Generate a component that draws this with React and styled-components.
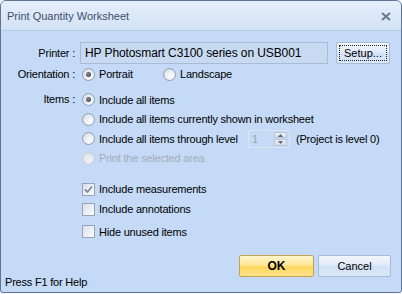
import React from "react";
import styled, { createGlobalStyle } from "styled-components";

const GlobalStyle = createGlobalStyle`
  html, body {
    margin: 0;
    padding: 0;
    background: #f4f6f9;
  }
  body {
    font-family: "Liberation Sans", Arial, sans-serif;
    font-size: 11px;
    letter-spacing: -0.2px;
    color: #000;
  }
`;

const Window = styled.div`
  width: 402px;
  height: 293px;
  box-sizing: border-box;
  display: flex;
  flex-direction: column;
  border: 1px solid #5f7596;
  border-radius: 6px 6px 3px 3px;
  background: #c4daf6;
  overflow: hidden;
`;

const TitleBar = styled.div`
  height: 30px;
  flex: none;
  box-sizing: border-box;
  display: flex;
  align-items: center;
  justify-content: space-between;
  padding: 1px 10px 0 6px;
  background: linear-gradient(#e6eefa, #dbe7f7 55%, #d2e2f5);
  border-bottom: 1px solid #b7cbe5;
  color: #3e4f6c;
  font-size: 11px;
  letter-spacing: 0;
`;

const Body = styled.div`
  flex: 1;
  display: flex;
  flex-direction: column;
  padding-top: 11px;
`;

const Row = styled.div`
  display: grid;
  grid-template-columns: 74px 1fr;
  column-gap: 5px;
  margin-top: ${(p) => p.$top || 0}px;
`;

const Label = styled.div`
  text-align: right;
  line-height: ${(p) => p.$line || 20}px;
  white-space: nowrap;
`;

const Content = styled.div`
  display: flex;
  flex-direction: ${(p) => (p.$column ? "column" : "row")};
  align-items: ${(p) => (p.$column ? "stretch" : "center")};
`;

const Field = styled.div`
  width: 248px;
  height: 22px;
  box-sizing: border-box;
  border: 1px solid #a7bcd7;
  background: #c7daf2;
  padding-left: 4px;
  line-height: 20px;
  font-size: 12px;
  letter-spacing: -0.1px;
  white-space: nowrap;
`;

const Button = styled.button`
  height: 22px;
  width: ${(p) => p.$w}px;
  box-sizing: border-box;
  margin: 0 0 0 ${(p) => p.$ml || 0}px;
  padding: ${(p) => (p.$focused ? "2px" : "0")};
  border: 1px solid ${(p) => (p.$primary ? "#c4a24f" : "#a6bcd9")};
  border-radius: 2px;
  font-family: inherit;
  font-size: ${(p) => (p.$primary ? "12px" : "11px")};
  letter-spacing: 0;
  font-weight: ${(p) => (p.$primary ? "bold" : "normal")};
  color: #000;
  background: ${(p) =>
    p.$primary
      ? "linear-gradient(#fff6cf, #ffe697 45%, #ffd75f 55%, #ffe28a)"
      : "linear-gradient(#f3f7fd, #e1ebf8 45%, #d1e1f5 55%, #dbe8f8)"};
  display: flex;
  align-items: center;
  justify-content: center;
`;

const Focus = styled.span`
  display: flex;
  align-items: center;
  justify-content: center;
  width: 100%;
  height: 100%;
  box-sizing: border-box;
  border: 1px dotted #222;
`;

const Option = styled.label`
  display: flex;
  align-items: center;
  height: ${(p) => p.$h || 19.5}px;
  width: ${(p) => (p.$w ? `${p.$w}px` : "auto")};
  flex: none;
  margin-left: 2px;
  margin-top: ${(p) => p.$top || 0}px;
  color: ${(p) => (p.$disabled ? "#a3acb9" : "#000")};
  white-space: nowrap;
`;

const Radio = styled.span`
  width: 13px;
  height: 13px;
  box-sizing: border-box;
  border-radius: 50%;
  border: 1px solid ${(p) => (p.$disabled ? "#c3cbd6" : "#8f9db2")};
  background: ${(p) =>
    p.$disabled
      ? "radial-gradient(circle at 60% 65%, #f0f2f5, #d7dde5)"
      : "radial-gradient(circle at 65% 70%, #ffffff, #e6eaf0 55%, #c9d1dc)"};
  margin-right: 4px;
  display: flex;
  align-items: center;
  justify-content: center;
  flex: none;
  &::after {
    content: "";
    display: ${(p) => (p.$checked ? "block" : "none")};
    width: 5px;
    height: 5px;
    border-radius: 50%;
    background: radial-gradient(circle at 40% 40%, #8a8f98, #2a2f36);
  }
`;

const Check = styled.span`
  width: 13px;
  height: 13px;
  box-sizing: border-box;
  border: 1px solid #95a3b7;
  background: linear-gradient(135deg, #d9dfe7, #eef1f5 60%, #fbfcfd);
  margin-right: 4px;
  flex: none;
  display: flex;
  align-items: center;
  justify-content: center;
`;

const Spinner = styled.div`
  width: 42px;
  height: 18px;
  box-sizing: border-box;
  border: 1px solid #dbe5f1;
  display: flex;
  align-items: center;
  justify-content: space-between;
  padding: 0 2px 0 3px;
  color: #9aa5b3;
  flex: none;
`;

const SpinButtons = styled.div`
  width: 13px;
  height: 14px;
  display: flex;
  flex-direction: column;
  gap: 1px;
`;

const SpinButton = styled.div`
  flex: 1;
  border: 1px solid #b9c5d4;
  border-radius: 1px;
  background: linear-gradient(#eef2f7, #d5dde8);
  display: flex;
  align-items: center;
  justify-content: center;
`;

const Hint = styled.span`
  margin-left: 6px;
  white-space: nowrap;
`;

const Footer = styled.div`
  flex: 1;
  display: flex;
  justify-content: space-between;
  padding: 0 10px 0 4px;
`;

const Help = styled.div`
  align-self: flex-end;
  line-height: 14px;
  padding-bottom: 3px;
`;

const Buttons = styled.div`
  align-self: flex-start;
  margin-top: 13px;
  display: flex;
`;

const CloseIcon = () => (
  <svg width="10" height="9" viewBox="0 0 10 9">
    <path d="M1 1 L9 8 M9 1 L1 8" stroke="#6b7a90" strokeWidth="2" />
  </svg>
);

const Arrow = ({ up }) => (
  <svg width="5" height="3" viewBox="0 0 5 3">
    <path d={up ? "M0 3 L2.5 0 L5 3 Z" : "M0 0 L2.5 3 L5 0 Z"} fill="#5b6574" />
  </svg>
);

const CheckMark = () => (
  <svg width="9" height="9" viewBox="0 0 9 9">
    <path d="M1 4.5 L3.5 7 L8 1.5" stroke="#7c8aa2" strokeWidth="1.8" fill="none" />
  </svg>
);

function RadioOption({ label, checked, disabled, w, h }) {
  return (
    <Option $w={w} $h={h} $disabled={disabled}>
      <Radio $checked={checked} $disabled={disabled} />
      {label}
    </Option>
  );
}

function CheckOption({ label, checked, top }) {
  return (
    <Option $h={20} $top={top}>
      <Check>{checked && <CheckMark />}</Check>
      {label}
    </Option>
  );
}

export default function App() {
  return (
    <>
      <GlobalStyle />
      <Window>
        <TitleBar>
          <span>Print Quantity Worksheet</span>
          <CloseIcon />
        </TitleBar>
        <Body>
          <Row>
            <Label $line={22}>Printer :</Label>
            <Content>
              <Field>HP Photosmart C3100 series on USB001</Field>
              <Button $w={54} $ml={8} $focused>
                <Focus>Setup...</Focus>
              </Button>
            </Content>
          </Row>
          <Row>
            <Label>Orientation :</Label>
            <Content>
              <RadioOption label="Portrait" checked w={79} h={20} />
              <RadioOption label="Landscape" h={20} />
            </Content>
          </Row>
          <Row $top={6}>
            <Label $line={19.5}>Items :</Label>
            <Content $column>
              <RadioOption label="Include all items" checked />
              <RadioOption label="Include all items currently shown in worksheet" />
              <Content>
                <RadioOption label="Include all items through level" w={166} />
                <Spinner>
                  1
                  <SpinButtons>
                    <SpinButton>
                      <Arrow up />
                    </SpinButton>
                    <SpinButton>
                      <Arrow />
                    </SpinButton>
                  </SpinButtons>
                </Spinner>
                <Hint>(Project is level 0)</Hint>
              </Content>
              <RadioOption label="Print the selected area" disabled />
            </Content>
          </Row>
          <Row $top={11}>
            <Label />
            <Content $column>
              <CheckOption label="Include measurements" checked />
              <CheckOption label="Include annotations" />
              <CheckOption label="Hide unused items" top={2.5} />
            </Content>
          </Row>
          <Footer>
            <Help>Press F1 for Help</Help>
            <Buttons>
              <Button $primary $w={75}>OK</Button>
              <Button $w={73} $ml={4}>Cancel</Button>
            </Buttons>
          </Footer>
        </Body>
      </Window>
    </>
  );
}
